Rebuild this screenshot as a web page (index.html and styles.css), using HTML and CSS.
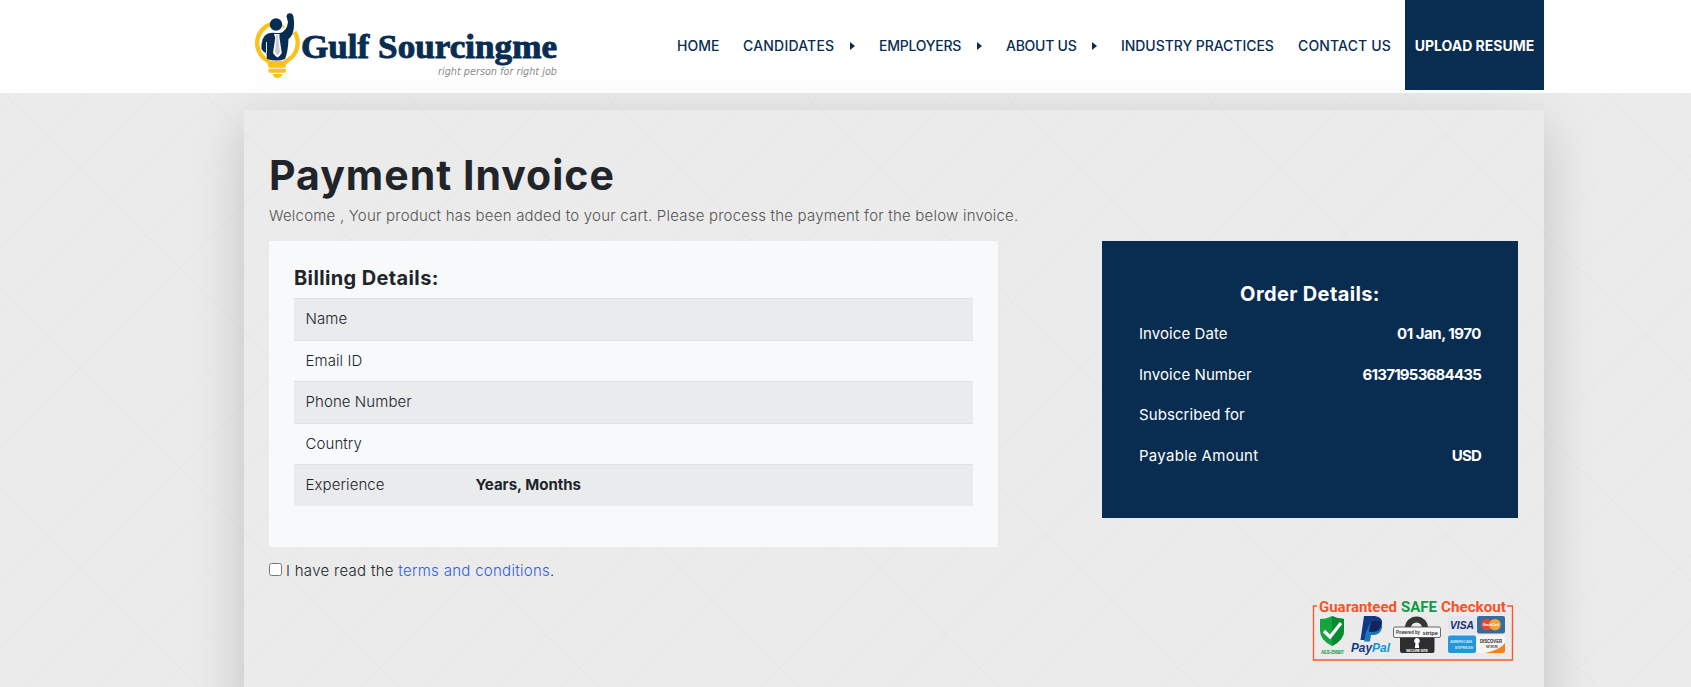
FILE: index.html
```html
<!DOCTYPE html>
<html lang="en">
<head>
<meta charset="utf-8">
<title>Payment Invoice</title>
<link rel="stylesheet" href="styles.css">
</head>
<body>
<header class="header">
  <div class="header-inner">
    <a class="logo">
      <svg width="310" height="84" viewBox="250 0 310 84">
        <path d="M271 24 A20 20 0 0 0 266.500 60 Q270 62 270.500 65.500 H283.500 Q284 62 288 60 A20 20 0 0 0 294.500 32" fill="none" stroke="#fbc21b" stroke-width="4.300"/>
        <path d="M268.500 61 H286 L284.500 67.300 H269.500Z" fill="#fbc21b"/>
        <path d="M282 24.500l3 1.500-2 3z" fill="#fbc21b"/>
        <rect x="268.500" y="68.800" width="17.500" height="4" rx="1" fill="#fbc21b"/>
        <path d="M272.500 74h10q-1 4-5 4t-5-4z" fill="#fbc21b"/>
        <circle cx="276" cy="24.500" r="6.200" fill="#092d51"/>
        <path d="M261.500 49 Q261 37 267 34 Q271 32 276 33 H280 Q287 31 288 22 L286.500 16.500 Q287 13 290 13.300 Q293 13.500 293.500 17 Q295 27 292.500 34 Q291 37 288.500 39 Q288 52 285 59 Q277 62 267 59 L266.500 53 Q264 53 261.500 49Z" fill="#092d51"/>
        <path d="M274 34 H279.500 L279.500 38 L281.800 53 Q280 56 277.500 57.500 Q275 56 273 53 L275.300 38Z" fill="#fff"/>
        <path d="M276 35 h2.500 l-.3 3 1.800 14 -2.500 3.500 -2.500-3.500 1.300-14z" fill="#c3ccd5"/>
        <path d="M266.500 42 V53" stroke="#fff" stroke-width=".9"/>
        <text class="logo-name" x="301" y="58" textLength="256" lengthAdjust="spacingAndGlyphs">Gulf Sourcingme</text>
        <text class="logo-tag" x="438" y="75" textLength="119" lengthAdjust="spacingAndGlyphs">right person for right job</text>
      </svg>
    </a>
    <nav class="nav">
      <a class="w-home">HOME</a>
      <a class="w-cand">CANDIDATES<i class="caret"></i></a>
      <a class="w-emp">EMPLOYERS<i class="caret"></i></a>
      <a class="w-about">ABOUT US<i class="caret"></i></a>
      <a class="w-ind">INDUSTRY PRACTICES</a>
      <a class="w-contact">CONTACT US</a>
    </nav>
    <a class="upload">UPLOAD RESUME</a>
  </div>
</header>
<main class="panel">
  <h1>Payment Invoice</h1>
  <p class="intro">Welcome , Your product has been added to your cart. Please process the payment for the below invoice.</p>
  <div class="columns">
    <section class="billing">
      <h2>Billing Details:</h2>
      <div class="row"><span>Name</span></div>
      <div class="row"><span>Email ID</span></div>
      <div class="row"><span>Phone Number</span></div>
      <div class="row"><span>Country</span></div>
      <div class="row"><span>Experience</span><b>Years, Months</b></div>
    </section>
    <section class="order">
      <h2>Order Details:</h2>
      <div class="line"><span>Invoice Date</span><b class="date">01 Jan, 1970</b></div>
      <div class="line"><span>Invoice Number</span><b class="number">61371953684435</b></div>
      <div class="line"><span>Subscribed for</span></div>
      <div class="line"><span class="payable">Payable Amount</span><b class="currency">USD</b></div>
    </section>
  </div>
  <label class="terms"><input type="checkbox"><span>I have read the <a>terms and conditions</a>.</span></label>
  <div class="badge">
    <svg width="202" height="64" viewBox="1312 598 202 64">
      <path d="M1317 606H1313.500V660H1512.500V606H1507" fill="none" stroke="#f75a31" stroke-width="1.4"/>
      <g class="badge-title">
        <text x="1319" y="611.500" textLength="78" lengthAdjust="spacingAndGlyphs" fill="#f75325">Guaranteed</text>
        <text x="1401" y="611.500" textLength="36" lengthAdjust="spacingAndGlyphs" fill="#119b43">SAFE</text>
        <text x="1441" y="611.500" textLength="65" lengthAdjust="spacingAndGlyphs" fill="#f75325">Checkout</text>
      </g>
      <path d="M1332 616q6 3 12 3v12q0 9-12 15q-12-6-12-15v-12q7 0 12-3z" fill="#14a53e"/>
      <path d="M1332 616q6 3 12 3v12q0 9-12 15z" fill="#078a31"/>
      <path d="M1324 631l6 6 11-14" fill="none" stroke="#fff" stroke-width="3.2"/>
      <text class="micro" x="1321" y="653.500" font-size="4.500" textLength="23" fill="#119b43">AES-256BIT</text>
      <path d="M1364 616h11q8 1 7 8-2 8-10 8h-4l-1.500 8h-6z" fill="#123984"/>
      <path d="M1371 621h8q4 2 3 7-2 7-8 7h-3l-1 6.500h-6l2-9.500z" fill="#1977bd"/>
      <path d="M1371 621h8l2.800 1.500q-1 9.500-9.500 9.500h-3.500z" fill="#17235e"/>
      <text class="paypal" x="1351" y="652" textLength="21" lengthAdjust="spacingAndGlyphs" fill="#123984">Pay</text>
      <text class="paypal" x="1372" y="652" textLength="18" lengthAdjust="spacingAndGlyphs" fill="#1595d3">Pal</text>
      <path d="M1408 631v-3a8.500 8.500 0 0 1 17 0v3" fill="none" stroke="#353638" stroke-width="6"/>
      <rect x="1400" y="636" width="34.500" height="17" rx="2" fill="#2d2e30"/>
      <rect x="1393.500" y="627" width="47" height="10.500" rx="1.500" fill="#f7f7f7" stroke="#444" stroke-width=".8"/>
      <text class="micro" x="1396" y="634.300" font-size="4.500" textLength="24" lengthAdjust="spacingAndGlyphs" fill="#333">Powered by</text>
      <text class="micro" x="1422.500" y="634.500" font-size="5.500" textLength="15.500" lengthAdjust="spacingAndGlyphs" fill="#333">stripe</text>
      <path d="M1417 638a3 3 0 0 1 1.500 5.500l.7 4.500h-4.400l.7-4.500a3 3 0 0 1 1.500-5.500z" fill="#fff"/>
      <text class="micro" x="1406" y="652" font-size="3.600" textLength="22" fill="#fff">SECURE SITE</text>
      <rect x="1448" y="616" width="28" height="17.500" rx="2" fill="#e3e6ec"/>
      <text class="visa" x="1450" y="629" textLength="24" lengthAdjust="spacingAndGlyphs">VISA</text>
      <rect x="1477" y="616" width="28" height="17.500" rx="2" fill="#376b9d"/>
      <circle cx="1487" cy="624.700" r="5.800" fill="#e6492f"/>
      <circle cx="1495" cy="624.700" r="5.800" fill="#f2a43b"/>
      <text class="micro" x="1483" y="626.200" font-size="4" textLength="16" lengthAdjust="spacingAndGlyphs" fill="#fff">MasterCard</text>
      <rect x="1448" y="635.500" width="28" height="17.500" rx="2" fill="#2596dc"/>
      <text class="micro" x="1450" y="643" font-size="4" textLength="22" lengthAdjust="spacingAndGlyphs" fill="#cfe9f8">AMERICAN</text>
      <text class="micro" x="1455" y="649" font-size="4" textLength="18" lengthAdjust="spacingAndGlyphs" fill="#cfe9f8">EXPRESS</text>
      <rect x="1477" y="635.500" width="28" height="17.500" rx="2" fill="#f7f5f2"/>
      <path d="M1485 653q15-3 20-10v8q0 2-2 2z" fill="#f58220"/>
      <text class="micro" x="1480" y="643" font-size="4.500" textLength="22" lengthAdjust="spacingAndGlyphs" fill="#272727">DISCOVER</text>
      <text class="micro" x="1486" y="647.500" font-size="2.600" textLength="12" lengthAdjust="spacingAndGlyphs" fill="#444">NETWORK</text>
    </svg>
  </div>
</main>
</body>
</html>
```
FILE: styles.css
```css
* { box-sizing: border-box; }
body {
  margin: 0;
  height: 687px;
  overflow: hidden;
  font-family: Inter, "Open Sans", sans-serif;
  font-size: 15px;
  color: #212529;
  background-color: #ebebeb;
  background-image:
    repeating-linear-gradient(45deg, transparent 0 139px, rgba(0,0,0,.018) 140px, transparent 141.4px),
    repeating-linear-gradient(-45deg, transparent 0 45px, rgba(0,0,0,.016) 46px, transparent 47.1px);
}
.header { height: 93px; background: #fff; }
.header-inner {
  width: 1300px;
  margin-left: 244px;
  height: 93px;
  display: flex;
  align-items: flex-start;
}
.logo { margin-left: 6px; width: 310px; height: 84px; flex: none; }
.logo-name { font: bold 33px "Liberation Serif", serif; fill: #092d51; stroke: #092d51; stroke-width: .9px; }
.logo-tag { font: italic 10px "DejaVu Sans", sans-serif; fill: #8b8b8b; }
.nav {
  margin-left: 117px;
  display: flex;
  height: 91px;
  align-items: center;
  flex: none;
  font-size: 14px;
  font-weight: 500;
  color: #092d51;
  white-space: nowrap;
}
.nav a { display: flex; align-items: center; }
.w-home { width: 66px; }
.w-cand { width: 136px; letter-spacing: .2px; }
.w-emp { width: 127px; letter-spacing: -.24px; }
.w-about { width: 115px; letter-spacing: -.25px; }
.w-ind { width: 177px; letter-spacing: -.05px; }
.w-contact { width: 107px; letter-spacing: .15px; }
.caret {
  margin-left: auto;
  margin-right: 24px;
  border: 4.5px solid transparent;
  border-left: 5px solid #092d51;
  border-right: 0;
}
.upload {
  width: 139px;
  height: 90px;
  line-height: 92px;
  background: #092d51;
  color: #fff;
  font-size: 14px;
  font-weight: 700;
  text-align: center;
  white-space: nowrap;
}
.panel {
  width: 1300px;
  height: 800px;
  margin: 17px 0 0 244px;
  padding: 41px 26px 0 25px;
  box-shadow: 0 16px 48px rgba(0,0,0,.175);
}
h1 { margin: 0; font-size: 41px; line-height: 48px; font-weight: 700; letter-spacing: 1px; }
.intro { margin: 5px 0 0; height: 37px; line-height: 24px; color: #555; font-weight: 300; letter-spacing: .213px; white-space: nowrap; }
.columns { display: flex; justify-content: space-between; align-items: flex-start; }
.billing { width: 729px; height: 306px; background: #f8f9fb; padding: 25px 25px 0; }
h2 { margin: 0; font-size: 20px; line-height: 24px; font-weight: 700; letter-spacing: .37px; }
.billing h2 { margin-bottom: 8px; }
.row {
  height: 41.5px;
  border-top: 1px solid #dee2e6;
  padding: 0 0 1.5px 11.5px;
  display: flex;
  align-items: center;
  font-weight: 300;
  letter-spacing: .08px;
}
.row:nth-of-type(odd) { background: #e9ebed; }
.row span { width: 170px; }
.row b { font-weight: 700; letter-spacing: 0; }
.order { width: 416px; height: 277px; background: #092d51; color: #fff; padding: 41px 37px 0; }
.order h2 { text-align: center; margin-bottom: 7px; }
.line { height: 40.7px; display: flex; justify-content: space-between; align-items: center; letter-spacing: .07px; }
.line b { font-weight: 700; }
.line .payable { letter-spacing: .28px; }
.line .date { letter-spacing: -.47px; }
.line .number { letter-spacing: -.77px; }
.line .currency { letter-spacing: -.8px; }
.terms { display: flex; align-items: center; margin-top: 11px; height: 24px; font-weight: 300; letter-spacing: .29px; }
.terms input { width: 13px; height: 13px; margin: 0 4px 2px 0; }
.terms a { color: #2b5fea; }
.badge { height: 64px; margin-top: 16px; padding-right: 4px; display: flex; justify-content: flex-end; }
.badge-title { font: bold 15px Roboto, sans-serif; }
.micro { font-family: "Liberation Sans", sans-serif; font-weight: bold; }
.paypal { font: italic bold 12px "Liberation Sans", sans-serif; }
.visa { font: italic bold 11px "Liberation Sans", sans-serif; fill: #1a2c74; }
```
